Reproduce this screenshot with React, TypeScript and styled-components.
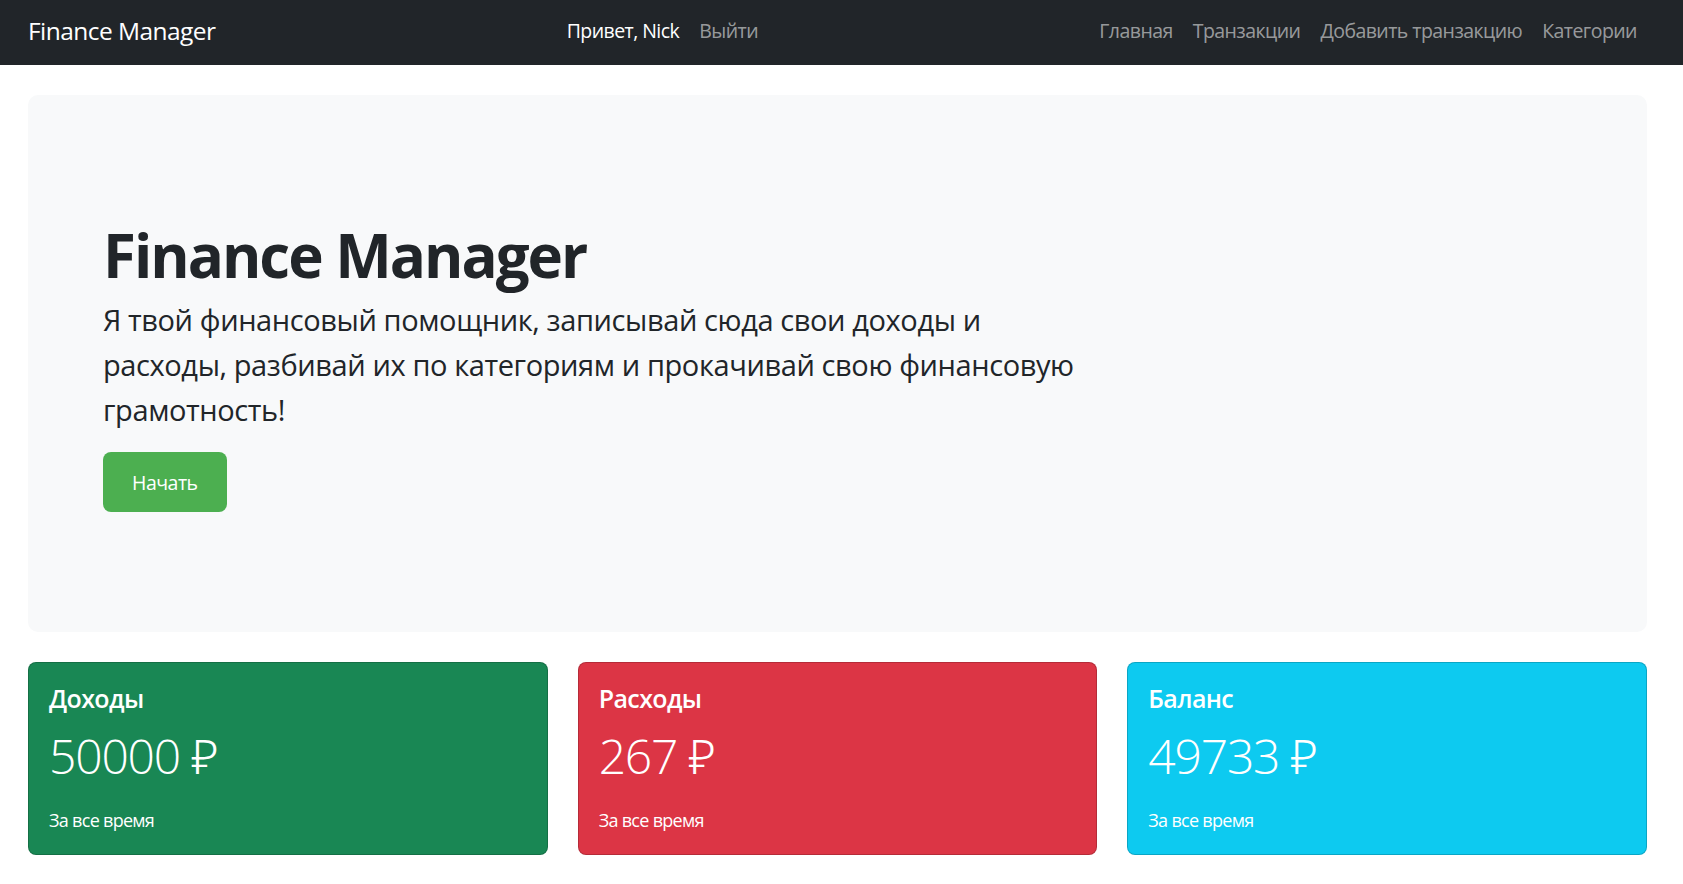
import React from "react";
import styled, { createGlobalStyle } from "styled-components";

const GlobalStyle = createGlobalStyle`
  * { box-sizing: border-box; }
  html, body {
    margin: 0;
    padding: 0;
    background: #fff;
  }
  body {
    font-family: "Open Sans", "Noto Sans", sans-serif;
    color: #212529;
    -webkit-font-smoothing: antialiased;
  }
`;

const Navbar = styled.nav`
  background: #212529;
  height: 65px;
`;

const NavInner = styled.div`
  height: 100%;
  margin: 0 36px 0 28px;
  padding-bottom: 4px;
  display: flex;
  align-items: center;
  justify-content: space-between;
`;

const Brand = styled.a`
  font-size: 24.5px;
  color: #fff;
  margin-right: 20px;
  text-decoration: none;
  letter-spacing: -0.55px;
`;

const NavGroup = styled.div`
  display: flex;
  align-items: center;
`;

const NavLink = styled.a<{ $active?: boolean }>`
  padding: 0 10px;
  font-size: 19.5px;
  letter-spacing: -0.55px;
  color: ${(p) => (p.$active ? "#fff" : "rgba(255, 255, 255, 0.55)")};
  text-decoration: none;
  cursor: pointer;
`;

const Container = styled.main`
  margin: 0 36px 0 28px;
  padding-top: 30px;
`;

const Jumbotron = styled.section`
  background: #f8f9fa;
  border-radius: 10px;
  padding: 120px 75px;
  margin-bottom: 30px;
`;

const Title = styled.h1`
  font-size: 60px;
  font-weight: 700;
  line-height: 72px;
  letter-spacing: -2px;
  margin: 4px 0 6px;
`;

const Lead = styled.p`
  font-size: 29px;
  line-height: 45px;
  width: 1000px;
  margin: 0 0 20px;
  letter-spacing: -0.4px;
`;

const StartButton = styled.button`
  height: 60px;
  padding: 0 29px;
  font-family: inherit;
  font-size: 19.5px;
  letter-spacing: -0.5px;
  color: #fff;
  background: #4caf50;
  border: none;
  border-radius: 8px;
  cursor: pointer;
`;

const Cards = styled.div`
  display: grid;
  grid-template-columns: repeat(3, 1fr);
  gap: 30px;
`;

const Card = styled.div<{ $bg: string }>`
  background: ${(p) => p.$bg};
  color: #fff;
  border: 1px solid rgba(0, 0, 0, 0.175);
  border-radius: 8px;
  padding: 20px 20px 19px;
`;

const CardTitle = styled.h5`
  font-size: 25px;
  font-weight: 600;
  line-height: 30px;
  letter-spacing: -0.6px;
  margin: 0 0 13px;
`;

const Amount = styled.p`
  font-size: 48px;
  font-weight: 300;
  line-height: 60px;
  letter-spacing: -1.2px;
  margin: 0 0 19px;
`;

const Note = styled.p`
  font-size: 18px;
  line-height: 30px;
  letter-spacing: -0.7px;
  margin: 0;
`;

const stats = [
  { title: "Доходы", value: 50000, bg: "#198754" },
  { title: "Расходы", value: 267, bg: "#dc3545" },
  { title: "Баланс", value: 49733, bg: "#0dcaf0" },
];

export default function App() {
  return (
    <>
      <GlobalStyle />
      <Navbar>
        <NavInner>
          <Brand href="#">Finance Manager</Brand>
          <NavGroup>
            <NavLink $active>Привет, Nick</NavLink>
            <NavLink>Выйти</NavLink>
          </NavGroup>
          <NavGroup>
            <NavLink>Главная</NavLink>
            <NavLink>Транзакции</NavLink>
            <NavLink>Добавить транзакцию</NavLink>
            <NavLink>Категории</NavLink>
          </NavGroup>
        </NavInner>
      </Navbar>
      <Container>
        <Jumbotron>
          <Title>Finance Manager</Title>
          <Lead>
            Я твой финансовый помощник, записывай сюда свои доходы и расходы,
            разбивай их по категориям и прокачивай свою финансовую грамотность!
          </Lead>
          <StartButton>Начать</StartButton>
        </Jumbotron>
        <Cards>
          {stats.map((s) => (
            <Card key={s.title} $bg={s.bg}>
              <CardTitle>{s.title}</CardTitle>
              <Amount>{s.value} ₽</Amount>
              <Note>За все время</Note>
            </Card>
          ))}
        </Cards>
      </Container>
    </>
  );
}
